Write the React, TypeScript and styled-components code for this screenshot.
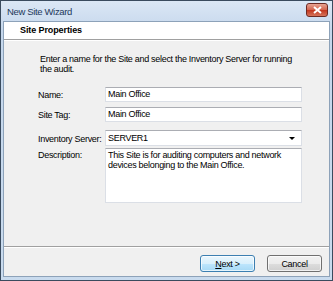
import styled, { createGlobalStyle } from 'styled-components';

const GlobalStyle = createGlobalStyle`
  html, body {
    margin: 0;
    padding: 0;
    background: #ffffff;
  }
  #root {
    width: 333px;
    height: 281px;
  }
`;

const fields = [
  { label: 'Name:', value: 'Main Office', gap: 0 },
  { label: 'Site Tag:', value: 'Main Office', gap: 5 },
];

export default function App() {
  return (
    <>
      <GlobalStyle />
      <Window>
        <TitleBar>
          <Title>New Site Wizard</Title>
          <CloseButton>
            <svg width="9" height="8" viewBox="0 0 9 8">
              <path d="M1 1 L8 7 M8 1 L1 7" stroke="#ffffff" strokeWidth="2" />
            </svg>
          </CloseButton>
        </TitleBar>
        <Client>
          <Header>Site Properties</Header>
          <Body>
            <Intro>
              Enter a name for the Site and select the Inventory Server for running
              <br />
              the audit.
            </Intro>
            {fields.map((f) => (
              <Row key={f.label} $gap={f.gap}>
                <Label>{f.label}</Label>
                <TextBox>{f.value}</TextBox>
              </Row>
            ))}
            <Row $gap={8}>
              <Label>Inventory Server:</Label>
              <ComboBox>
                <span>SERVER1</span>
                <Arrow />
              </ComboBox>
            </Row>
            <Row $gap={2} $top>
              <Label $top>Description:</Label>
              <TextArea>
                This Site is for auditing computers and network
                <br />
                devices belonging to the Main Office.
              </TextArea>
            </Row>
          </Body>
          <Footer>
            <Button $primary>
              <u>N</u>ext &gt;
            </Button>
            <Button>Cancel</Button>
          </Footer>
        </Client>
      </Window>
    </>
  );
}

const Window = styled.div`
  box-sizing: border-box;
  width: 333px;
  height: 281px;
  display: flex;
  flex-direction: column;
  background: linear-gradient(#dbe7f5, #c5d7ec 30px, #c9dbee);
  border: 1px solid #3a4b5e;
  padding: 0 2px 3px 2px;
  font-family: 'Liberation Sans', Arial, sans-serif;
  font-size: 9px;
  letter-spacing: -0.3px;
  color: #000000;
  white-space: nowrap;
`;

const TitleBar = styled.div`
  height: 20px;
  display: flex;
  align-items: center;
  justify-content: space-between;
  padding: 0 2px 0 4px;
`;

const Title = styled.div`
  font-size: 9.5px;
  letter-spacing: -0.35px;
  color: #1e395b;
`;

const CloseButton = styled.div`
  box-sizing: border-box;
  width: 22px;
  height: 14px;
  margin-top: -2px;
  display: flex;
  align-items: center;
  justify-content: center;
  border: 1px solid #6d2a23;
  border-radius: 3px;
  background: linear-gradient(#e8a493, #d2624c 50%, #c2351d 51%, #d5735a);
`;

const Client = styled.div`
  flex: 1;
  display: flex;
  flex-direction: column;
  background: #f0f0f0;
  border: 1px solid #8da2b9;
`;

const Header = styled.div`
  height: 17px;
  line-height: 17px;
  padding-left: 16px;
  background: #ffffff;
  font-weight: bold;
  letter-spacing: -0.1px;
  border-bottom: 1px solid #a0a0a0;
  box-shadow: 0 1px 0 #ffffff;
`;

const Body = styled.div`
  flex: 1;
  display: flex;
  flex-direction: column;
  padding: 14px 27px 0 34px;
`;

const Intro = styled.div`
  line-height: 10px;
  padding-left: 2px;
  margin-bottom: 13px;
`;

const Row = styled.div<{ $top?: boolean; $gap: number }>`
  display: grid;
  grid-template-columns: 67px 1fr;
  align-items: ${(p) => (p.$top ? 'start' : 'center')};
  margin-top: ${(p) => p.$gap}px;
`;

const Label = styled.div<{ $top?: boolean }>`
  padding-top: ${(p) => (p.$top ? 2 : 1)}px;
`;

const TextBox = styled.div`
  box-sizing: border-box;
  height: 15px;
  line-height: 13px;
  padding-left: 2px;
  background: #ffffff;
  border: 1px solid #dbdfe6;
  border-top-color: #abadb3;
`;

const ComboBox = styled(TextBox)`
  height: 16px;
  display: flex;
  align-items: center;
  justify-content: space-between;
  padding-right: 6px;
`;

const Arrow = styled.div`
  width: 0;
  height: 0;
  border-left: 3px solid transparent;
  border-right: 3px solid transparent;
  border-top: 3px solid #000000;
`;

const TextArea = styled(TextBox)`
  height: 55px;
  line-height: 10px;
  padding-top: 1px;
`;

const Footer = styled.div`
  display: flex;
  justify-content: flex-end;
  gap: 12px;
  padding: 8px 7px 0 0;
  height: 21px;
  border-top: 1px solid #a0a0a0;
  box-shadow: inset 0 1px 0 #ffffff;
`;

const Button = styled.div<{ $primary?: boolean }>`
  box-sizing: border-box;
  width: 55px;
  height: 17px;
  display: flex;
  align-items: center;
  justify-content: center;
  border-radius: 3px;
  border: 1px solid ${(p) => (p.$primary ? '#3c7fb1' : '#707070')};
  background: ${(p) =>
    p.$primary
      ? 'linear-gradient(#eaf6fd, #d9f0fc 50%, #bee6fd 51%, #a7d9f5)'
      : 'linear-gradient(#f2f2f2, #ebebeb 50%, #dddddd 51%, #cfcfcf)'};
  box-shadow: inset 0 0 0 1px rgba(255, 255, 255, 0.7);
`;
